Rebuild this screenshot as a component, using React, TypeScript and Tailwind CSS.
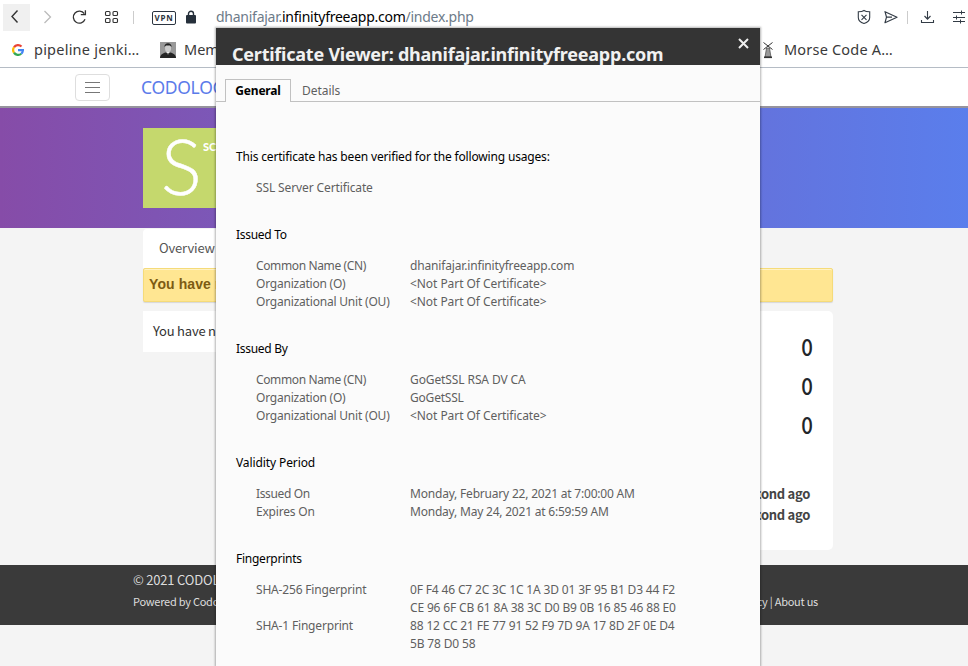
import React from 'react';

type Entry = { label: string; lines: string[]; tracking: string; track: string };

function Section({ title, titleClass, children }: { title: string; titleClass: string; children: React.ReactNode }) {
  return (
    <section className="mb-[29px] whitespace-nowrap">
      <h2 className={`mb-[13px] h-[18px] leading-[18px] text-black ${titleClass}`}>{title}</h2>
      <div className="pl-5 leading-[18px] text-[#5f5f5f]">{children}</div>
    </section>
  );
}

function Rows({ entries }: { entries: Entry[] }) {
  return (
    <dl className="grid grid-cols-[154px_1fr]">
      {entries.map((e) => (
        <React.Fragment key={e.label}>
          <dt><span className={e.tracking}>{e.label}</span></dt>
          <dd>
            {e.lines.map((l) => (
              <div key={l}><span className={e.track}>{l}</span></div>
            ))}
          </dd>
        </React.Fragment>
      ))}
    </dl>
  );
}

const issuedTo: Entry[] = [
  { label: 'Common Name (CN)', lines: ['dhanifajar.infinityfreeapp.com'], tracking: 'tracking-[-0.370px]', track: 'tracking-[-0.160px]' },
  { label: 'Organization (O)', lines: ['<Not Part Of Certificate>'], tracking: 'tracking-[-0.220px]', track: 'tracking-[-0.060px]' },
  { label: 'Organizational Unit (OU)', lines: ['<Not Part Of Certificate>'], tracking: 'tracking-[-0.200px]', track: 'tracking-[-0.060px]' },
];
const issuedBy: Entry[] = [
  { label: 'Common Name (CN)', lines: ['GoGetSSL RSA DV CA'], tracking: 'tracking-[-0.370px]', track: 'tracking-[-0.100px]' },
  { label: 'Organization (O)', lines: ['GoGetSSL'], tracking: 'tracking-[-0.220px]', track: 'tracking-[-0.200px]' },
  { label: 'Organizational Unit (OU)', lines: ['<Not Part Of Certificate>'], tracking: 'tracking-[-0.200px]', track: 'tracking-[-0.060px]' },
];
const validity: Entry[] = [
  { label: 'Issued On', lines: ['Monday, February 22, 2021 at 7:00:00 AM'], tracking: 'tracking-[-0.350px]', track: 'tracking-[-0.200px]' },
  { label: 'Expires On', lines: ['Monday, May 24, 2021 at 6:59:59 AM'], tracking: 'tracking-[-0.200px]', track: 'tracking-[-0.210px]' },
];
const fingerprints: Entry[] = [
  {
    label: 'SHA-256 Fingerprint',
    lines: ['0F F4 46 C7 2C 3C 1C 1A 3D 01 3F 95 B1 D3 44 F2', 'CE 96 6F CB 61 8A 38 3C D0 B9 0B 16 85 46 88 E0'],
    tracking: 'tracking-[-0.180px]',
    track: 'tracking-[-0.155px]',
  },
  {
    label: 'SHA-1 Fingerprint',
    lines: ['88 12 CC 21 FE 77 91 52 F9 7D 9A 17 8D 2F 0E D4', '5B 78 D0 58'],
    tracking: 'tracking-[-0.180px]',
    track: 'tracking-[-0.155px]',
  },
];

function Toolbar() {
  return (
    <div className="flex h-[34px] items-center text-[#2b3440]">
      <div className="ml-[3px] mt-[1px] flex h-[27px] w-[27px] items-center justify-center bg-[#f0f0f0]">
        <svg width="27" height="27" viewBox="0 0 27 27" fill="none" stroke="#333" strokeWidth="1.4"><path d="M14.500 6.500 9 12.500l5.500 6" /></svg>
      </div>
      <svg className="ml-[10px]" width="16" height="18" viewBox="0 0 16 18" fill="none" stroke="#bbb" strokeWidth="1.3"><path d="m4.500 3 6 6-6 6" /></svg>
      <svg className="ml-[15px]" width="17" height="18" viewBox="0 0 17 18" fill="none" stroke="#333" strokeWidth="1.300">
        <path d="M14 11.200A6 6 0 1 1 13.300 5.700" /><path d="M9.800 6.600H14.400V2.200" />
      </svg>
      <svg className="ml-[15px]" width="16" height="16" viewBox="0 0 16 16" fill="none" stroke="#333" strokeWidth="1.100">
        <rect x="2.500" y="2.500" width="4.500" height="4" rx="1" /><rect x="10" y="2.500" width="4.500" height="4" rx="1" />
        <rect x="2.500" y="9.500" width="4.500" height="4" rx="1" /><rect x="10" y="9.500" width="4.500" height="4" rx="1" />
      </svg>
      <div className="ml-[14px] h-[13px] w-px bg-[#ccc]" />
      <div className="ml-[18px] mt-[2px] flex h-[14px] w-6 items-center justify-center rounded-[2px] border border-[#2b3440] text-[8px] font-bold leading-none tracking-[0.7px]">VPN</div>
      <svg className="ml-[9px]" width="12" height="16" viewBox="0 0 12 16" fill="#26303b">
        <rect x="1" y="6" width="10" height="8.500" rx="1" /><path d="M3.500 7V4.800a2.500 2.500 0 0 1 5 0V7" fill="none" stroke="#26303b" strokeWidth="1.400" />
      </svg>
      <div className="ml-[19px] mt-[-2px] whitespace-nowrap text-[14px] tracking-[-0.255px] text-[#6d7b89]">dhanifajar.<span className="text-black">infinityfreeapp.com</span>/index.php</div>
      <svg className="ml-auto" width="14" height="16" viewBox="0 0 14 16" fill="none" stroke="#333c46" strokeWidth="1.100">
        <path d="M7 1.500C5.500 2.600 3.500 2.800 1.300 2.800v5.700c0 3 2.200 5 5.700 6 3.500-1 5.700-3 5.700-6V2.800C10.500 2.800 8.500 2.600 7 1.500Z" /><path d="m4.500 5.800 5 5m0-5-5 5" />
      </svg>
      <svg className="ml-[12px]" width="16" height="16" viewBox="0 0 16 16" fill="none" stroke="#333c46" strokeWidth="1.200" strokeLinejoin="round"><path d="M2 2.700 14 8.200 2 13.700l1.500-5.500ZM3.500 8.200H9" /></svg>
      <div className="ml-[8px] h-[13px] w-px bg-[#ccc]" />
      <svg className="ml-[12px]" width="16" height="16" viewBox="0 0 16 16" fill="none" stroke="#333c46" strokeWidth="1.100"><path d="M7.500 2V10M4.500 7 7.500 10.200 10.500 7M1.500 11V13.500H13.500V11" /></svg>
      <svg className="ml-[16px] mr-[2px]" width="14" height="16" viewBox="0 0 14 16" fill="none" stroke="#333c46" strokeWidth="1"><path d="M1 3.500h12M1 8.500h12M1 12.500h12M9.500 1.500v4M4.500 6.500v4M8.500 10.500v4" /></svg>
    </div>
  );
}

function Bookmarks() {
  return (
    <div className="flex h-[32px] items-center text-[14.500px] text-[#3a3a3a]">
      <svg className="ml-[12px]" width="12" height="12" viewBox="0 0 24 24" fill="none" strokeWidth="4.500">
        <path stroke="#ea4335" d="M4 6.500A10 10 0 0 1 19 5" /><path stroke="#fbbc05" d="M4 6.500a10 10 0 0 0 0 11" />
        <path stroke="#34a853" d="M4 17.500a10 10 0 0 0 14.500 2" /><path stroke="#4285f4" d="M12 12h9.800c0 3-1 5.500-3.300 7.500" />
      </svg>
      <div className="ml-[10px] mt-[-1px] w-[107px] whitespace-nowrap tracking-[0.230px]">pipeline jenki…</div>
      <svg className="ml-[19px]" width="16" height="16" viewBox="0 0 16 16">
        <rect width="16" height="16" fill="#999" /><path d="M0 16c0-3 3-5 5.500-5.500h5C13 11 16 13 16 16Z" fill="#252525" />
        <ellipse cx="8" cy="6" rx="3" ry="4.300" fill="#ccc" /><path d="M4.500 5C4 0 12 0 11.500 5L10 3.500H6Z" fill="#222" /><path d="m6.300 10 1.700 3 1.700-3Z" fill="#eee" /><path d="M8 11v4" stroke="#222" />
      </svg>
      <div className="ml-[8px] mt-[-1px] w-[60px] whitespace-nowrap">Mem</div>
      <svg className="ml-[518px]" width="12" height="18" viewBox="0 0 12 18" fill="none" stroke="#333" strokeWidth="1">
        <path d="m1.500 1.500 9 7M10.500 1.500l-9 7" /><path d="M4.500 7h3l1.500 9h-6Z" fill="#999" strokeWidth=".6" /><path d="M2 16.300h8" strokeWidth="1.600" />
      </svg>
      <div className="ml-[10px] mt-[-1px] whitespace-nowrap tracking-[0.200px]">Morse Code A…</div>
    </div>
  );
}

function ForumPage() {
  return (
    <div className="font-['Noto_Sans_CJK_SC',sans-serif]">
      <nav className="flex h-[38px] items-center bg-white">
        <div className="ml-[75px] flex h-[27px] w-[35px] flex-col items-center justify-center gap-[4px] rounded-[4px] border border-[#dedede]">
          <i className="h-px w-[15px] bg-[#777]" /><i className="h-px w-[15px] bg-[#777]" /><i className="h-px w-[15px] bg-[#777]" />
        </div>
        <div className="ml-[31px] w-[75px] overflow-hidden font-['Noto_Sans',sans-serif] text-[17.500px] tracking-[-0.300px] text-[#5b7bea]">CODOLOGIC</div>
      </nav>
      <div className="h-[2px] bg-[#96939d]" />
      <div className="h-[120px] bg-[linear-gradient(90deg,#864ca8_0%,#5a7eec_100%)] pl-[143px] pt-[20px]">
        <div className="flex h-[80px] w-[120px] bg-[#c5d86d] pl-[18px] text-white">
          <span className="mt-[-1px] w-[42px] font-['Lato',sans-serif] text-[76px] font-light leading-[77px] [-webkit-text-stroke:0.500px_white]">S</span>
          <span className="mt-[12px] w-[13px] overflow-hidden font-['Lato',sans-serif] text-[11px] font-black leading-[14px]">SC</span>
        </div>
      </div>
      <main className="h-[337px] bg-[#f4f4f4] px-[143px] pt-[1px]">
        <div className="flex h-[39px] w-[300px] items-center rounded-t-[4px] bg-white pb-[2px] pl-4 text-[13px] tracking-[-0.150px] text-[#555]">Overview</div>
        <div className="flex h-[34px] w-[690px] items-center rounded-[2px] border border-[#f5db79] bg-[#ffe692] pb-[2px] pl-[5px] font-['Liberation_Sans',sans-serif] text-[14px] font-bold tracking-[0.100px] text-[#7d5b13] shadow-[0_1px_1px_rgba(0,0,0,0.12),inset_0_1px_0_#fff2c4]">You have n</div>
        <div className="mt-[9px] flex w-[690px] items-start justify-between">
          <div className="flex h-[41px] w-[300px] items-center bg-white pb-[2px] pl-[10px] text-[13px] tracking-[-0.220px] text-[#333]">You have n</div>
          <div className="h-[239px] w-[300px] rounded-[5px] bg-white pt-[15px] text-right">
            <div className="mr-[20px] text-[24px] leading-[39px] text-[#212529]">
              {[0, 1, 2].map((n) => <div key={n} className="origin-right scale-x-[0.850] font-medium">0</div>)}
            </div>
            <div className="mr-[23px] mt-[40px] text-[13px] font-bold leading-[21px] tracking-[-0.300px] text-[#444]"><div>cond ago</div><div>cond ago</div></div>
          </div>
        </div>
      </main>
      <footer className="flex h-[60px] justify-between bg-[#3a3a3a] pl-[133px] pr-[150px] text-[#ddd]">
        <div className="whitespace-nowrap"><div className="mt-[5px] text-[13px] leading-[20px] tracking-[-0.200px]">© 2021 CODOL</div><div className="mt-[2px] text-[11px] leading-[18px] tracking-[-0.250px]">Powered by Codof</div></div>
        <div className="mt-[27px] text-[11px] leading-[18px] tracking-[-0.250px]">Privacy | About us</div>
      </footer>
    </div>
  );
}

function CertificateDialog() {
  return (
    <div className="absolute left-[216px] top-[28px] h-[638px] w-[544px] bg-[#fbfbfb] text-[12px] shadow-[0_0_2px_1px_rgba(0,0,0,0.300)]">
      <header className="relative h-[37px] overflow-hidden bg-[#343434] pl-4">
        <h1 className="mt-[14px] whitespace-nowrap text-[18px] font-bold leading-[24px] tracking-[-0.235px] text-[#f1f1f1]">Certificate Viewer: dhanifajar.infinityfreeapp.com</h1>
        <svg className="absolute right-[11px] top-[10px]" width="11" height="11" viewBox="0 0 11 11" stroke="#eee" strokeWidth="2"><path d="m1 1 9 9M10 1l-9 9" /></svg>
      </header>
      <div className="mt-[14px] flex h-[23px]">
        <div className="w-[9px] border-b border-[#c1c1c1]" />
        <div className="flex w-[66px] items-center justify-center border border-b-0 border-[#c1c1c1] font-bold tracking-[-0.200px] text-black">General</div>
        <div className="flex flex-1 items-center border-b border-[#c1c1c1] pl-[11px] pt-[2px] tracking-[-0.050px] text-[#5f5f5f]">Details</div>
      </div>
      <div className="pl-5 pt-[46px]">
        <Section title="This certificate has been verified for the following usages:" titleClass="tracking-[-0.170px]"><span className="tracking-[-0.120px]">SSL Server Certificate</span></Section>
        <Section title="Issued To" titleClass="tracking-[-0.300px]"><Rows entries={issuedTo} /></Section>
        <Section title="Issued By" titleClass="tracking-[-0.300px]"><Rows entries={issuedBy} /></Section>
        <Section title="Validity Period" titleClass="tracking-[-0.100px]"><Rows entries={validity} /></Section>
        <Section title="Fingerprints" titleClass="tracking-[-0.250px]"><Rows entries={fingerprints} /></Section>
      </div>
    </div>
  );
}

export default function App() {
  return (
    <div className="relative h-[666px] w-[968px] overflow-hidden bg-[#f4f4f4] font-['Noto_Sans',sans-serif]">
      <div className="h-[68px] border-b border-[#b5bcc5] bg-white"><Toolbar /><Bookmarks /></div>
      <ForumPage />
      <CertificateDialog />
    </div>
  );
}
